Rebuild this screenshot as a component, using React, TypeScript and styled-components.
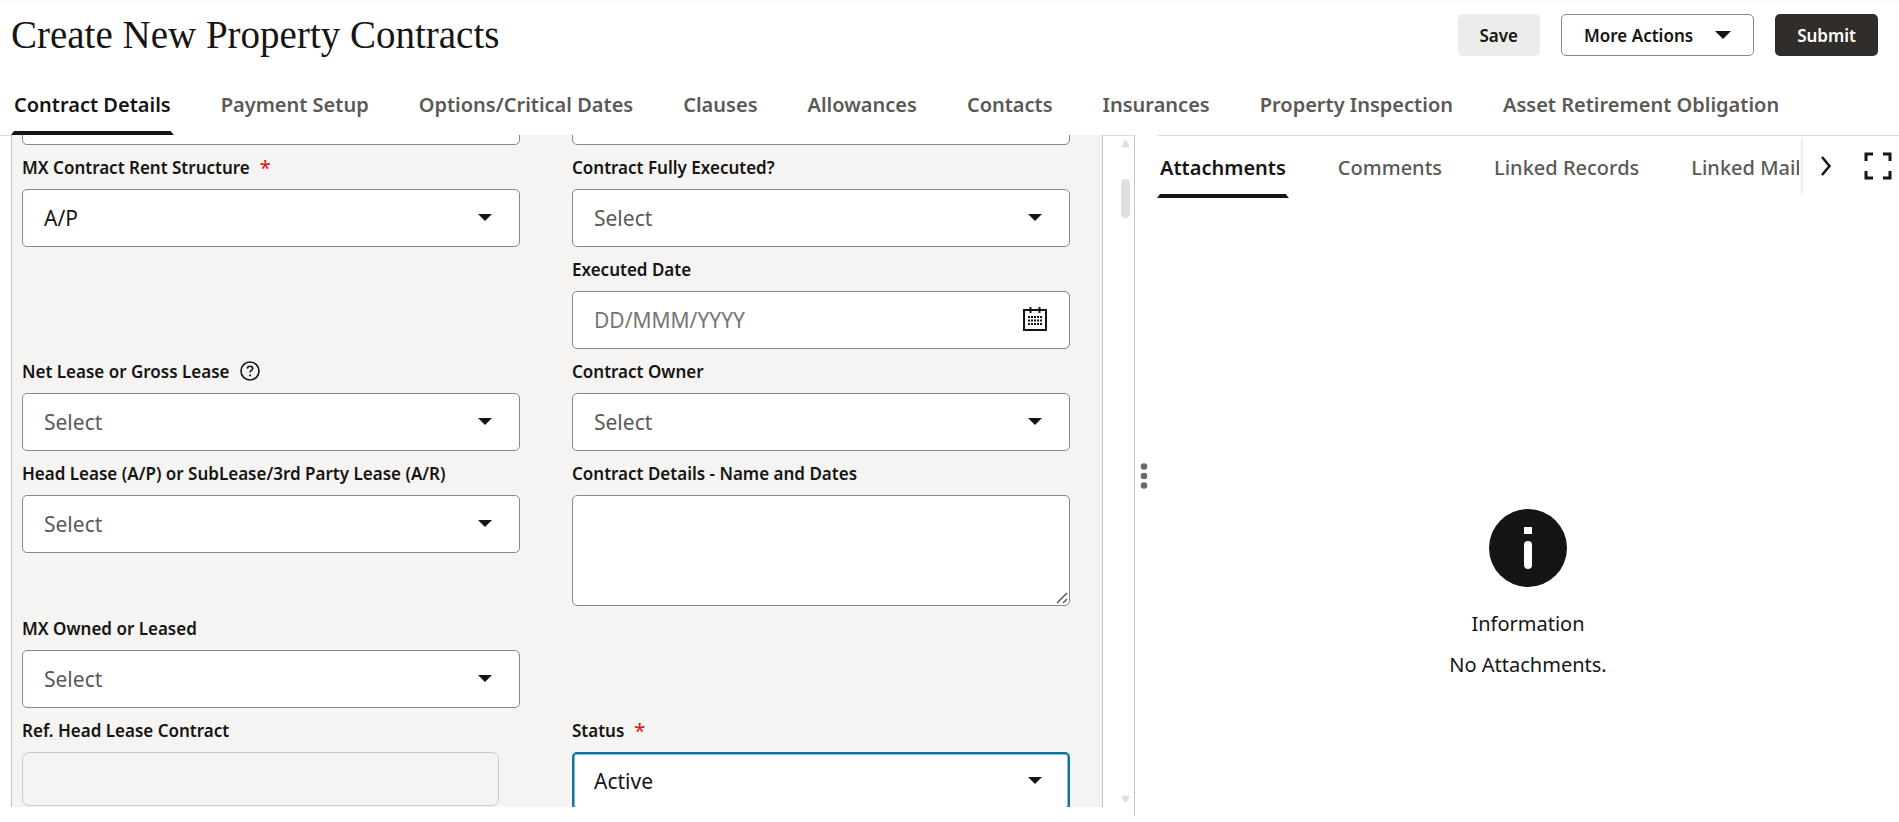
import React, { useLayoutEffect, useRef } from "react";
import styled, { createGlobalStyle, css } from "styled-components";

const Global = createGlobalStyle`
  *, *::before, *::after { box-sizing: border-box; }
  body { margin: 0; background: #fff; color: #161513; font-family: "Noto Sans", "Open Sans", sans-serif; font-size: 20px; }
  button, input, select, textarea { font-family: inherit; color: inherit; }
`;

const Page = styled.div`
  height: 100vh;
  display: flex;
  flex-direction: column;
  overflow: hidden;
  border-top: 2px solid #fafafa;
`;
const Header = styled.header`
  display: flex;
  align-items: center;
  justify-content: space-between;
  height: 66px;
  padding: 0 21px 0 11px;
  flex: none;
`;
const Title = styled.h1`
  margin: 0;
  font: 400 39px/44px Georgia, "Liberation Serif", serif;
`;
const Actions = styled.div`
  display: flex;
  gap: 21px;
`;
const Button = styled.button<{ $kind?: "solid" | "outlined" | "dark" }>`
  height: 42px;
  padding: 0 22px;
  border-radius: 5px;
  border: 0;
  font-size: 17px;
  font-weight: 600;
  display: flex;
  align-items: center;
  gap: 22px;
  background: #ececea;
  ${(p) => p.$kind === "outlined" && css`background: #fff; border: 1px solid #8b8987;`}
  ${(p) => p.$kind === "dark" && css`background: #312d2a; color: #fff;`}
`;

const Tab = styled.button<{ $active?: boolean }>`
  flex: none;
  position: relative;
  border: 0;
  background: none;
  padding: 0 3px;
  font-size: 20px;
  font-weight: ${(p) => (p.$active ? 600 : 500)};
  color: ${(p) => (p.$active ? "#161513" : "#5b5957")};
  white-space: nowrap;
  &::after {
    content: "";
    display: ${(p) => (p.$active ? "block" : "none")};
    position: absolute;
    left: 0;
    right: 0;
    bottom: 0;
    height: 4px;
    background: #161513;
    clip-path: polygon(3px 0, calc(100% - 3px) 0, 100% 100%, 0 100%);
  }
`;
const TabList = styled.nav`
  display: flex;
  flex: none;
  min-width: 0;
`;
const MainTabs = styled(TabList)`
  gap: 44px;
  height: 67px;
  padding-left: 11px;
  ${Tab} {
    padding-top: 5px;
    font-weight: 600;
  }
`;

const Body = styled.main`
  flex: 1;
  min-height: 0;
  display: grid;
  grid-template-columns: 1135fr 764fr;
  padding-bottom: 6px;
`;
const FormPane = styled.section`
  display: flex;
  min-width: 0;
  min-height: 0;
  border-top: 1px solid #dfdedd;
  border-right: 1px solid #c4c3c1;
  padding-left: 11px;
  padding-bottom: 9px;
`;
const FormScroll = styled.div`
  flex: 1;
  min-width: 0;
  margin-top: -1px;
  overflow-y: auto;
  scrollbar-width: none;
  background: #f5f4f2;
  border: solid #c4c3c1;
  border-width: 0 1px;
`;
const Form = styled.form`
  display: grid;
  grid-template-columns: 1fr 1fr;
  column-gap: 52px;
  padding: 0 32px 80px 10px;
`;
const Field = styled.div<{ $column?: number }>`
  display: flex;
  flex-direction: column;
  min-width: 0;
  grid-column: ${(p) => p.$column ?? "auto"};
`;
const LabelRow = styled.div`
  display: flex;
  align-items: center;
  gap: 10px;
  height: 44px;
  font-size: 17px;
  font-weight: 600;
  white-space: nowrap;
`;
const Required = styled.span`
  color: #e00b0b;
  font-size: 20px;
  font-weight: 400;
`;
const Box = styled.div<{ $tall?: boolean }>`
  position: relative;
  display: flex;
  height: ${(p) => (p.$tall ? 111 : 58)}px;
`;
const boxStyle = css`
  width: 100%;
  border: 1px solid #8b8987;
  border-radius: 5px;
  background: #fff;
  padding: 0 21px;
  font-size: 21px;
  outline: 0;
`;
const Select = styled.select<{ $empty: boolean; $focused?: boolean }>`
  ${boxStyle}
  appearance: none;
  color: ${(p) => (p.$empty ? "#5b5957" : "#161513")};
  ${(p) => p.$focused && css`border: 2px solid #0f7399; padding: 0 20px; box-shadow: inset 0 0 0 1px #8fbccd;`}
`;
const Input = styled.input`
  ${boxStyle}
  &::placeholder { color: #777573; opacity: 1; }
`;
const LockedInput = styled.input`
  width: calc(100% - 21px);
  height: 54px;
  border: 1px solid #cbcac8;
  border-radius: 7px;
  background: transparent;
`;
const TextArea = styled.textarea`
  ${boxStyle}
  display: block;
  resize: none;
`;
const ResizeGrip = styled.svg`
  position: absolute;
  right: 2px;
  bottom: 2px;
`;
const Adornment = styled.span<{ $right: number }>`
  position: absolute;
  right: ${(p) => p.$right}px;
  top: 0;
  bottom: 2px;
  display: flex;
  align-items: center;
  pointer-events: none;
`;
const ScrollTrack = styled.div`
  flex: none;
  width: 31px;
  display: flex;
  flex-direction: column;
  align-items: flex-start;
  padding: 4px 0 4px 18px;
`;
const ScrollThumb = styled.div`
  width: 9px;
  height: 39px;
  margin: 31px 0 auto;
  border-radius: 5px;
  background: #e0dfde;
`;

const SidePane = styled.aside`
  display: flex;
  min-width: 0;
`;
const Splitter = styled.div`
  width: 22px;
  flex: none;
  display: flex;
  flex-direction: column;
  align-items: center;
  justify-content: center;
  padding-right: 4px;
`;
const SideContent = styled.div`
  flex: 1;
  min-width: 0;
  display: flex;
  flex-direction: column;
  border-top: 1px solid #dfdedd;
`;
const SideBar = styled.div`
  display: flex;
  gap: 8px;
  height: 62px;
`;
const TabStrip = styled.div`
  flex: 1;
  min-width: 0;
  display: flex;
  gap: 4px;
`;
const SideTabs = styled(TabList)`
  flex: 1;
  gap: 46px;
  overflow: hidden;
`;
const IconButton = styled.button`
  flex: none;
  width: 42px;
  height: 60px;
  padding: 0;
  border: 0;
  background: #fff;
  display: flex;
  align-items: center;
  justify-content: center;
`;
const NextButton = styled(IconButton)`
  width: 46px;
  box-shadow: -3px 0 3px -2px #dddcda;
`;
const Empty = styled.div`
  flex: 1;
  display: flex;
  flex-direction: column;
  align-items: center;
  justify-content: center;
  line-height: 41px;
  padding-top: 180px;
  p { margin: 0; }
  svg { margin-bottom: 16px; }
`;

const Caret = ({ w = 14, h = 7 }: { w?: number; h?: number }) => (
  <svg width={w} height={h} viewBox="0 0 14 7" preserveAspectRatio="none" aria-hidden>
    <path d="M0 0h14L7 7z" fill="#161513" />
  </svg>
);
const Calendar = () => (
  <svg width="26" height="26" viewBox="0 -1 26 26" aria-hidden>
    <path d="M2 3h22v20H2z" fill="none" stroke="#161513" strokeWidth="2" />
    <path d="M8.500 0v6M17.500 0v6" stroke="#161513" strokeWidth="2" />
    <path d="M6 10h14M6 13.500h14M6 17h14" stroke="#161513" strokeWidth="2" strokeDasharray="2 1" />
  </svg>
);
const Help = () => (
  <svg width="20" height="20" viewBox="0 0 20 20" fill="none" stroke="#161513" aria-hidden>
    <circle cx="10" cy="10" r="9" strokeWidth="1.6" />
    <path d="M7.300 7.600c.1-1.500 1.200-2.400 2.700-2.400s2.700.9 2.700 2.300c0 1.900-2.700 1.900-2.700 4.100" strokeWidth="1.600" />
    <path d="M10 13.400v1.800" strokeWidth="1.800" />
  </svg>
);
const Triangle = ({ down }: { down?: boolean }) => (
  <svg width="9" height="8" viewBox="0 0 9 8" aria-hidden>
    <path d={down ? "M1 1h7L5.500 7h-2z" : "M1 7h7L5.500 1h-2z"} fill="#e0dfde" stroke="#e0dfde" strokeLinejoin="round" />
  </svg>
);

type SelectFieldProps = {
  id: string;
  label: string;
  value?: string;
  required?: boolean;
  help?: boolean;
  focused?: boolean;
  column?: number;
};
const SelectField = ({ id, label, value, required, help, focused, column }: SelectFieldProps) => (
  <Field $column={column}>
    <LabelRow>
      <label htmlFor={id}>{label}</label>
      {required && <Required>*</Required>}
      {help && <Help />}
    </LabelRow>
    <Box>
      <Select id={id} $empty={!value} $focused={focused} defaultValue={value ?? "Select"}>
        <option>{value ?? "Select"}</option>
      </Select>
      <Adornment $right={28}><Caret /></Adornment>
    </Box>
  </Field>
);

const mainTabs = ["Contract Details", "Payment Setup", "Options/Critical Dates", "Clauses", "Allowances", "Contacts", "Insurances", "Property Inspection", "Asset Retirement Obligation"];
const sideTabs = ["Attachments", "Comments", "Linked Records", "Linked Mail"];

export default function App() {
  const scroller = useRef<HTMLDivElement>(null);
  // Open the form just past its first row of fields.
  useLayoutEffect(() => {
    if (scroller.current) scroller.current.scrollTop = 48;
  }, []);

  return (
    <Page>
      <Global />
      <Header>
        <Title>Create New Property Contracts</Title>
        <Actions>
          <Button>Save</Button>
          <Button $kind="outlined">More Actions <Caret w={16} h={8} /></Button>
          <Button $kind="dark">Submit</Button>
        </Actions>
      </Header>
      <MainTabs>
        {mainTabs.map((t, i) => <Tab key={t} $active={i === 0}>{t}</Tab>)}
      </MainTabs>
      <Body>
        <FormPane>
          <FormScroll ref={scroller}>
            <Form>
              <Field><Box><Input aria-label="Contract reference" /></Box></Field>
              <Field><Box><Input aria-label="Contract name" /></Box></Field>
              <SelectField id="rent" label="MX Contract Rent Structure" value="A/P" required />
              <SelectField id="executed" label="Contract Fully Executed?" />
              <Field $column={2}>
                <LabelRow><label htmlFor="date">Executed Date</label></LabelRow>
                <Box>
                  <Input id="date" placeholder="DD/MMM/YYYY" />
                  <Adornment $right={22}><Calendar /></Adornment>
                </Box>
              </Field>
              <SelectField id="net" label="Net Lease or Gross Lease" help />
              <SelectField id="owner" label="Contract Owner" />
              <SelectField id="head" label="Head Lease (A/P) or SubLease/3rd Party Lease (A/R)" />
              <Field>
                <LabelRow><label htmlFor="details">Contract Details - Name and Dates</label></LabelRow>
                <Box $tall>
                  <TextArea id="details" />
                  <ResizeGrip width="12" height="12" viewBox="0 0 12 12" stroke="#5b5957" strokeWidth="1.500" aria-hidden>
                    <path d="M1 11L11 1M7 11l4-4" />
                  </ResizeGrip>
                </Box>
              </Field>
              <SelectField id="owned" label="MX Owned or Leased" column={1} />
              <Field $column={1}>
                <LabelRow><label htmlFor="ref">Ref. Head Lease Contract</label></LabelRow>
                <LockedInput id="ref" disabled />
              </Field>
              <SelectField id="status" label="Status" value="Active" required focused column={2} />
            </Form>
          </FormScroll>
          <ScrollTrack>
            <Triangle />
            <ScrollThumb />
            <Triangle down />
          </ScrollTrack>
        </FormPane>
        <SidePane>
          <Splitter>
            <svg width="8" height="28" viewBox="0 0 8 28" fill="#6b6967" aria-hidden>
              <circle cx="4" cy="4.500" r="3.300" /><circle cx="4" cy="14" r="3.300" /><circle cx="4" cy="23.500" r="3.300" />
            </svg>
          </Splitter>
          <SideContent>
            <SideBar>
              <TabStrip>
                <SideTabs>
                  {sideTabs.map((t, i) => <Tab key={t} $active={i === 0}>{t}</Tab>)}
                </SideTabs>
                <NextButton aria-label="Next tabs">
                  <svg width="12" height="20" viewBox="0 0 12 20" fill="none" stroke="#161513" strokeWidth="2.500" aria-hidden>
                    <path d="M2 1l7.500 9L2 19" />
                  </svg>
                </NextButton>
              </TabStrip>
              <IconButton aria-label="Full screen">
                <svg width="28" height="28" viewBox="0 0 28 28" fill="none" stroke="#161513" strokeWidth="3" aria-hidden>
                  <path d="M9 2H2v7M19 2h7v7M26 19v7h-7M9 26H2v-7" />
                </svg>
              </IconButton>
            </SideBar>
            <Empty>
              <svg width="78" height="78" viewBox="0 0 78 78" aria-hidden>
                <circle cx="39" cy="39" r="39" fill="#161513" />
                <rect x="35" y="18" width="8" height="7" fill="#fff" />
                <rect x="35" y="32" width="8" height="28" rx="4" fill="#fff" />
              </svg>
              <p>Information</p>
              <p>No Attachments.</p>
            </Empty>
          </SideContent>
        </SidePane>
      </Body>
    </Page>
  );
}
